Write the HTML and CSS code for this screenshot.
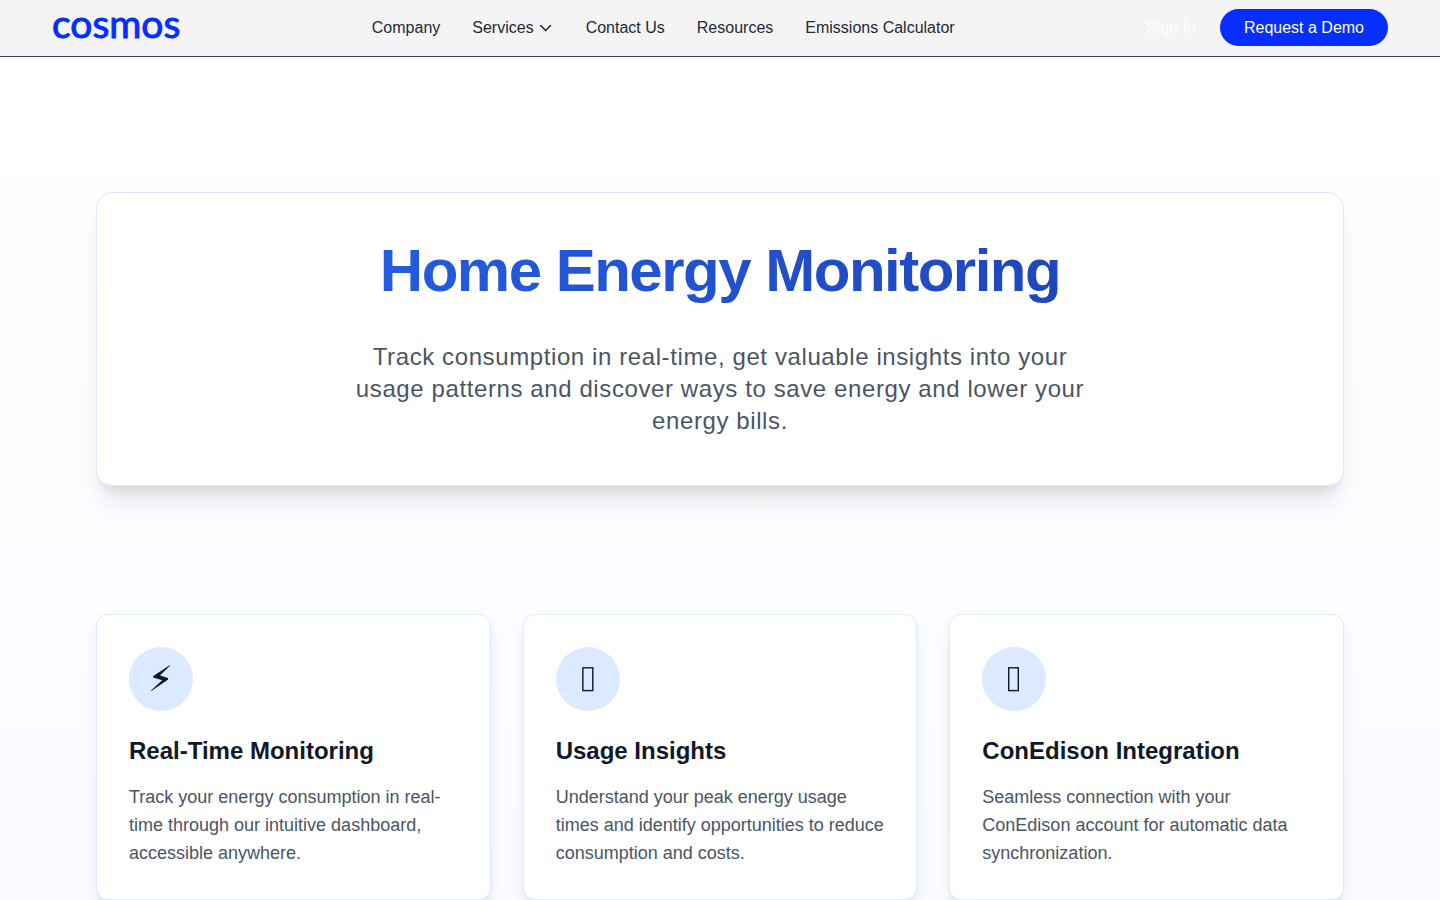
FILE: index.html
```html
<!DOCTYPE html>
<html lang="en">

  <head>
    <meta charset="UTF-8">
    <meta name="viewport" content="width=device-width, initial-scale=1.0">
    <title>Home Energy Monitoring - Cosmos</title>
    <link rel="stylesheet" href="styles.css">
  </head>

  <body>

    <header class="header">
      <a class="logo" href="#">cosmos</a>

      <nav class="nav">
        <a href="#">Company</a>
        <button class="nav-menu" type="button">
          Services
          <svg class="chevron" viewBox="0 0 16 16" aria-hidden="true">
            <path d="M2.7 5.6 L7.6 10.6 L12.5 5.6" />
          </svg>
        </button>
        <a href="#">Contact Us</a>
        <a href="#">Resources</a>
        <a href="#">Emissions Calculator</a>
      </nav>

      <div class="actions">
        <a class="sign-in" href="#">Sign In</a>
        <button class="demo-btn" type="button">Request a Demo</button>
      </div>
    </header>

    <main class="main">
      <section class="hero">
        <h1>Home Energy Monitoring</h1>
        <p>Track consumption in real-time, get valuable insights into your usage patterns and discover ways to save energy and lower your energy bills.</p>
      </section>

      <section class="features">
        <div class="card">
          <svg class="icon" viewBox="0 0 64 64" aria-hidden="true">
            <path class="bolt" d="M41 18 L24 29.2 L24.2 30.6 L33.2 33.2 L22 43.6 L22.3 44 L39.2 32.4 L39 31 L31 28.4 L41.2 18.4 Z" />
          </svg>
          <h3>Real-Time Monitoring</h3>
          <p>Track your energy consumption in real-time through our intuitive dashboard, accessible anywhere.</p>
        </div>

        <div class="card">
          <svg class="icon" viewBox="0 0 64 64" aria-hidden="true">
            <rect class="box" x="26.9" y="20.8" width="9.9" height="22.8" />
          </svg>
          <h3>Usage Insights</h3>
          <p>Understand your peak energy usage times and identify opportunities to reduce consumption and costs.</p>
        </div>

        <div class="card">
          <svg class="icon" viewBox="0 0 64 64" aria-hidden="true">
            <rect class="box" x="26.7" y="20.8" width="9.6" height="22.8" />
          </svg>
          <h3>ConEdison Integration</h3>
          <p>Seamless connection with your ConEdison account for automatic data synchronization.</p>
        </div>
      </section>
    </main>

  </body>

</html>
```

FILE: styles.css
```css
* {
  box-sizing: border-box;
  margin: 0;
  padding: 0;
}

body {
  font-family: "Liberation Sans", Arial, sans-serif;
  font-size: 16px;
  line-height: 24px;
  color: #111827;
}

a {
  color: inherit;
  text-decoration: none;
}

button {
  font: inherit;
  color: inherit;
  border: none;
  background: none;
  cursor: pointer;
}

.header {
  display: flex;
  justify-content: space-between;
  align-items: center;
  height: 57px;
  padding: 0 52px;
  background-color: #f4f4f4;
  border-bottom: 1px solid #334155;
}

.logo {
  font-family: Lato, sans-serif;
  font-size: 39px;
  line-height: 40px;
  color: #052eff;
  padding-bottom: 10px;
  -webkit-text-stroke: 1px #052eff;
}

.nav {
  display: flex;
  gap: 32px;
  color: #1f2937;
}

.nav-menu {
  display: flex;
  align-items: center;
  gap: 4px;
}

.chevron {
  width: 16px;
  height: 16px;
  fill: none;
  stroke: #1f2937;
  stroke-width: 1.5;
  stroke-linecap: round;
  stroke-linejoin: round;
}

.actions {
  display: flex;
  align-items: center;
  gap: 24px;
  padding-bottom: 1px;
}

.sign-in {
  color: #ffffff;
}

.demo-btn {
  padding: 8px 24px;
  line-height: 21px;
  border-radius: 20px;
  background-color: #052eff;
  color: #ffffff;
}

.demo-btn:hover {
  background-color: #0426cc;
}

.main {
  padding: 135px 96px 0;
  background: linear-gradient(to bottom, #ffffff, #f9fbff);
}

.hero {
  padding: 48px;
  text-align: center;
  background: #ffffff;
  border: 1px solid #dbeafe;
  border-radius: 16px;
  box-shadow: 0 20px 25px -5px rgba(0, 0, 0, 0.1), 0 8px 10px -6px rgba(0, 0, 0, 0.1);
}

.hero h1 {
  font-size: 60px;
  line-height: 60px;
  letter-spacing: -0.025em;
  padding-bottom: 8px;
  margin-bottom: 32px;
  background: linear-gradient(to right, #2563eb, #1e40af);
  background-clip: text;
  -webkit-background-clip: text;
  color: transparent;
}

.hero p {
  max-width: 768px;
  margin: 0 auto;
  font-size: 24px;
  line-height: 32px;
  letter-spacing: 0.025em;
  color: #4b5563;
}

.features {
  display: grid;
  grid-template-columns: repeat(3, 1fr);
  gap: 32px;
  margin-top: 128px;
}

.card {
  padding: 32px;
  background: #ffffff;
  border: 1px solid #dbeafe;
  border-radius: 12px;
  box-shadow: 0 10px 15px -3px rgba(0, 0, 0, 0.1), 0 4px 6px -4px rgba(0, 0, 0, 0.1);
}

.icon {
  display: block;
  width: 64px;
  height: 64px;
  margin-bottom: 24px;
  border-radius: 50%;
  background: #dbeafe;
}

.bolt {
  fill: #111827;
}

.box {
  fill: none;
  stroke: #111827;
  stroke-width: 1.4;
}

.card h3 {
  font-size: 24px;
  line-height: 32px;
  margin-bottom: 16px;
}

.card p {
  font-size: 18px;
  line-height: 28px;
  color: #4b5563;
}
```
